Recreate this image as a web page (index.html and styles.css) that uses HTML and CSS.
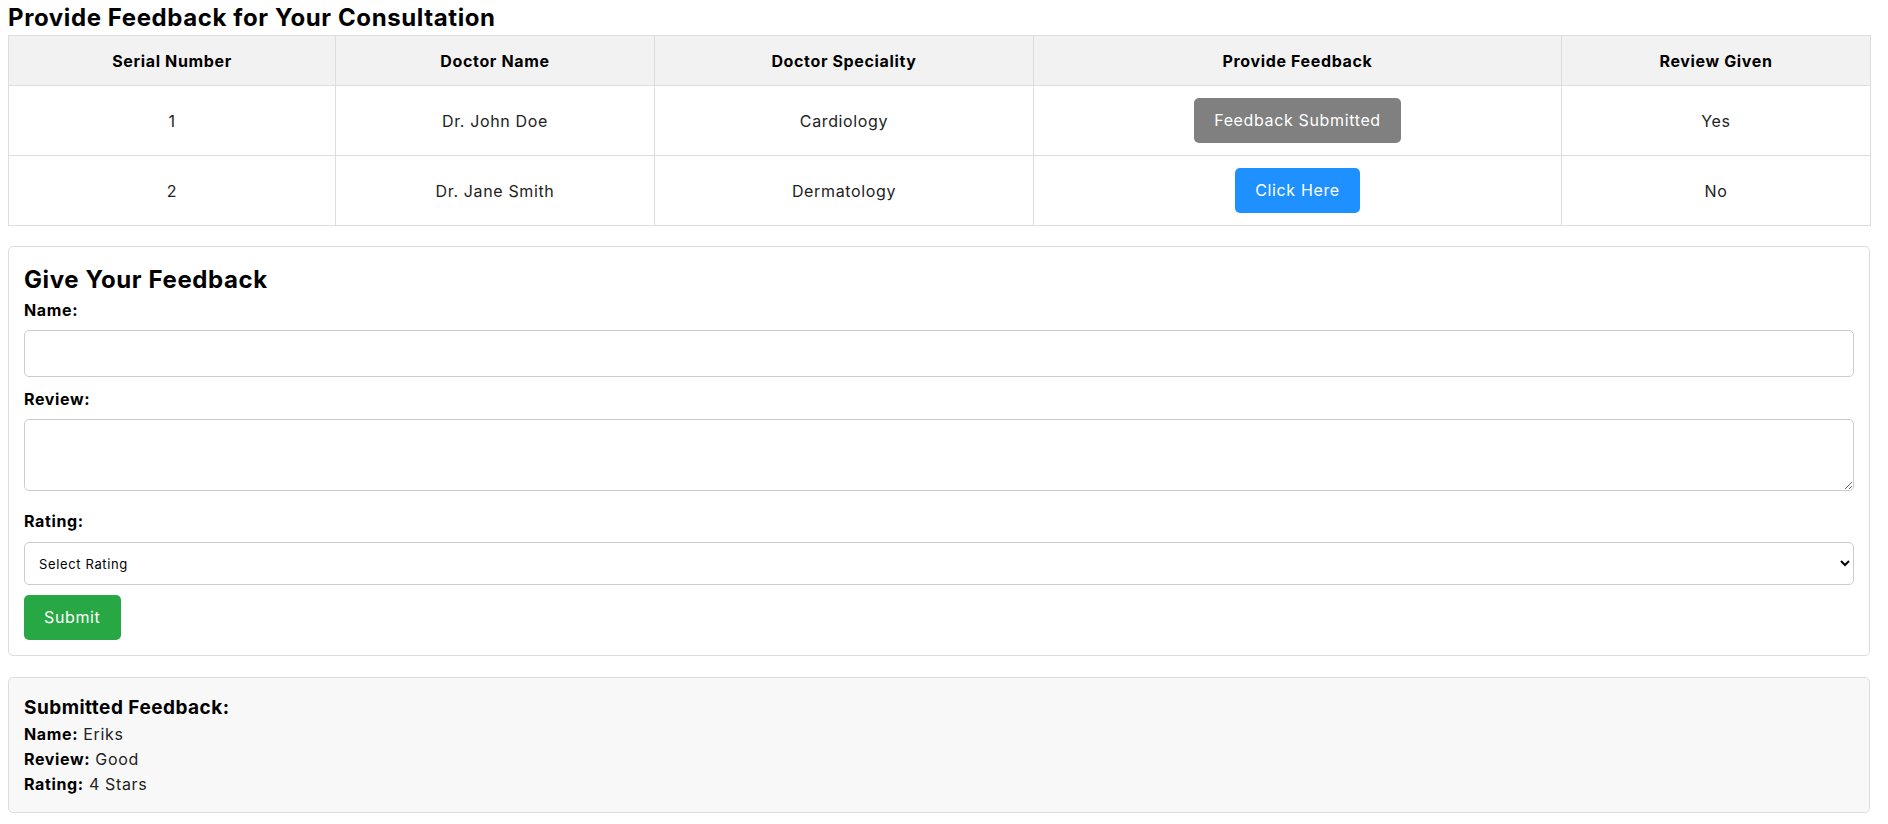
FILE: index.html
```html
<!DOCTYPE html>
<html lang="en">
<head>
<meta charset="utf-8">
<title>Provide Feedback for Your Consultation</title>
<link rel="stylesheet" href="styles.css">
</head>
<body>
<main class="page">
  <h2 class="page-title">Provide Feedback for Your Consultation</h2>
  <table class="consult-table">
    <colgroup>
      <col class="col-serial">
      <col class="col-doctor">
      <col class="col-spec">
      <col class="col-action">
      <col class="col-review">
    </colgroup>
    <thead>
      <tr>
        <th>Serial Number</th>
        <th>Doctor Name</th>
        <th>Doctor Speciality</th>
        <th>Provide Feedback</th>
        <th>Review Given</th>
      </tr>
    </thead>
    <tbody>
      <tr>
        <td>1</td>
        <td>Dr. John Doe</td>
        <td>Cardiology</td>
        <td><button class="btn btn-disabled" type="button">Feedback Submitted</button></td>
        <td>Yes</td>
      </tr>
      <tr>
        <td>2</td>
        <td>Dr. Jane Smith</td>
        <td>Dermatology</td>
        <td><button class="btn btn-primary" type="button">Click Here</button></td>
        <td>No</td>
      </tr>
    </tbody>
  </table>

  <section class="card feedback-form">
    <h2 class="card-title">Give Your Feedback</h2>
    <form class="form">
      <label class="field-label" for="name">Name:</label>
      <input class="field field-input" id="name" type="text">
      <label class="field-label" for="review">Review:</label>
      <textarea class="field field-textarea" id="review"></textarea>
      <label class="field-label label-rating" for="rating">Rating:</label>
      <select class="field field-select" id="rating">
        <option>Select Rating</option>
        <option>1 Star</option>
        <option>2 Stars</option>
        <option>3 Stars</option>
        <option>4 Stars</option>
        <option>5 Stars</option>
      </select>
      <button class="btn btn-success" type="button">Submit</button>
    </form>
  </section>

  <section class="card submitted">
    <h3 class="submitted-title">Submitted Feedback:</h3>
    <p class="submitted-line"><strong>Name:</strong> Eriks</p>
    <p class="submitted-line"><strong>Review:</strong> Good</p>
    <p class="submitted-line"><strong>Rating:</strong> 4 Stars</p>
  </section>
</main>
</body>
</html>
```

FILE: styles.css
```css
* {
  box-sizing: border-box;
}

body {
  margin: 0 8px;
  font-family: "Inter", "Open Sans", "Liberation Sans", sans-serif;
  font-size: 16px;
  line-height: 1.5;
  letter-spacing: 0.04em;
  color: #222;
  background: #fff;
}

.page {
  width: 1862px;
}

.page-title {
  margin: 0;
  font-size: 24px;
  line-height: 35px;
  font-weight: 700;
  letter-spacing: 0.025em;
  color: #000;
}

.consult-table {
  width: 100%;
  border-collapse: collapse;
  table-layout: fixed;
}

.col-serial { width: 327px; }
.col-doctor { width: 319px; }
.col-spec { width: 379px; }
.col-action { width: 528px; }
.col-review { width: 309px; }

.consult-table th,
.consult-table td {
  border: 1px solid #ddd;
  padding: 12px;
  text-align: center;
  vertical-align: middle;
}

.consult-table th {
  height: 50px;
  background: #f2f2f2;
  font-weight: 700;
  color: #000;
}

.consult-table td {
  height: 70px;
  color: #222;
}

.btn {
  display: inline-block;
  height: 45px;
  padding: 0 20px;
  border: 0;
  border-radius: 5px;
  font-family: inherit;
  font-size: 16px;
  line-height: 45px;
  letter-spacing: inherit;
  color: #fff;
  cursor: pointer;
}

.btn-disabled {
  background: #808080;
}

.btn-primary {
  background: #1e90ff;
}

.btn-success {
  background: #28a745;
  display: block;
  margin-top: 10px;
}

.card {
  margin-top: 20px;
  border: 1px solid #ddd;
  border-radius: 5px;
  padding: 15px;
}

.card-title {
  margin: 0;
  font-size: 24px;
  line-height: 36px;
  font-weight: 700;
  letter-spacing: 0.025em;
  color: #000;
}

.form {
  display: flex;
  flex-direction: column;
  align-items: flex-start;
}

.field-label {
  display: block;
  font-weight: 700;
  color: #000;
  line-height: 24px;
  margin-bottom: 8px;
}

.field {
  width: 100%;
  border: 1px solid #ccc;
  border-radius: 5px;
  padding: 10px;
  font-family: inherit;
  letter-spacing: inherit;
  background: #fff;
}

.field-input {
  height: 47px;
  font-size: 16px;
  margin-bottom: 10px;
}

.field-textarea {
  display: block;
  height: 72px;
  font-size: 16px;
  margin-bottom: 18px;
}

.label-rating {
  margin-bottom: 9px;
}

.field-select {
  height: 43px;
  font-size: 13px;
  color: #000;
}

.submitted {
  margin-top: 21px;
  background: #f8f8f8;
}

.submitted-title {
  margin: 0;
  font-size: 19px;
  line-height: 29px;
  font-weight: 700;
  letter-spacing: 0.025em;
  color: #000;
}

.submitted-line {
  margin: 0;
  line-height: 25px;
  color: #222;
}

.submitted-line strong {
  color: #000;
}
```
